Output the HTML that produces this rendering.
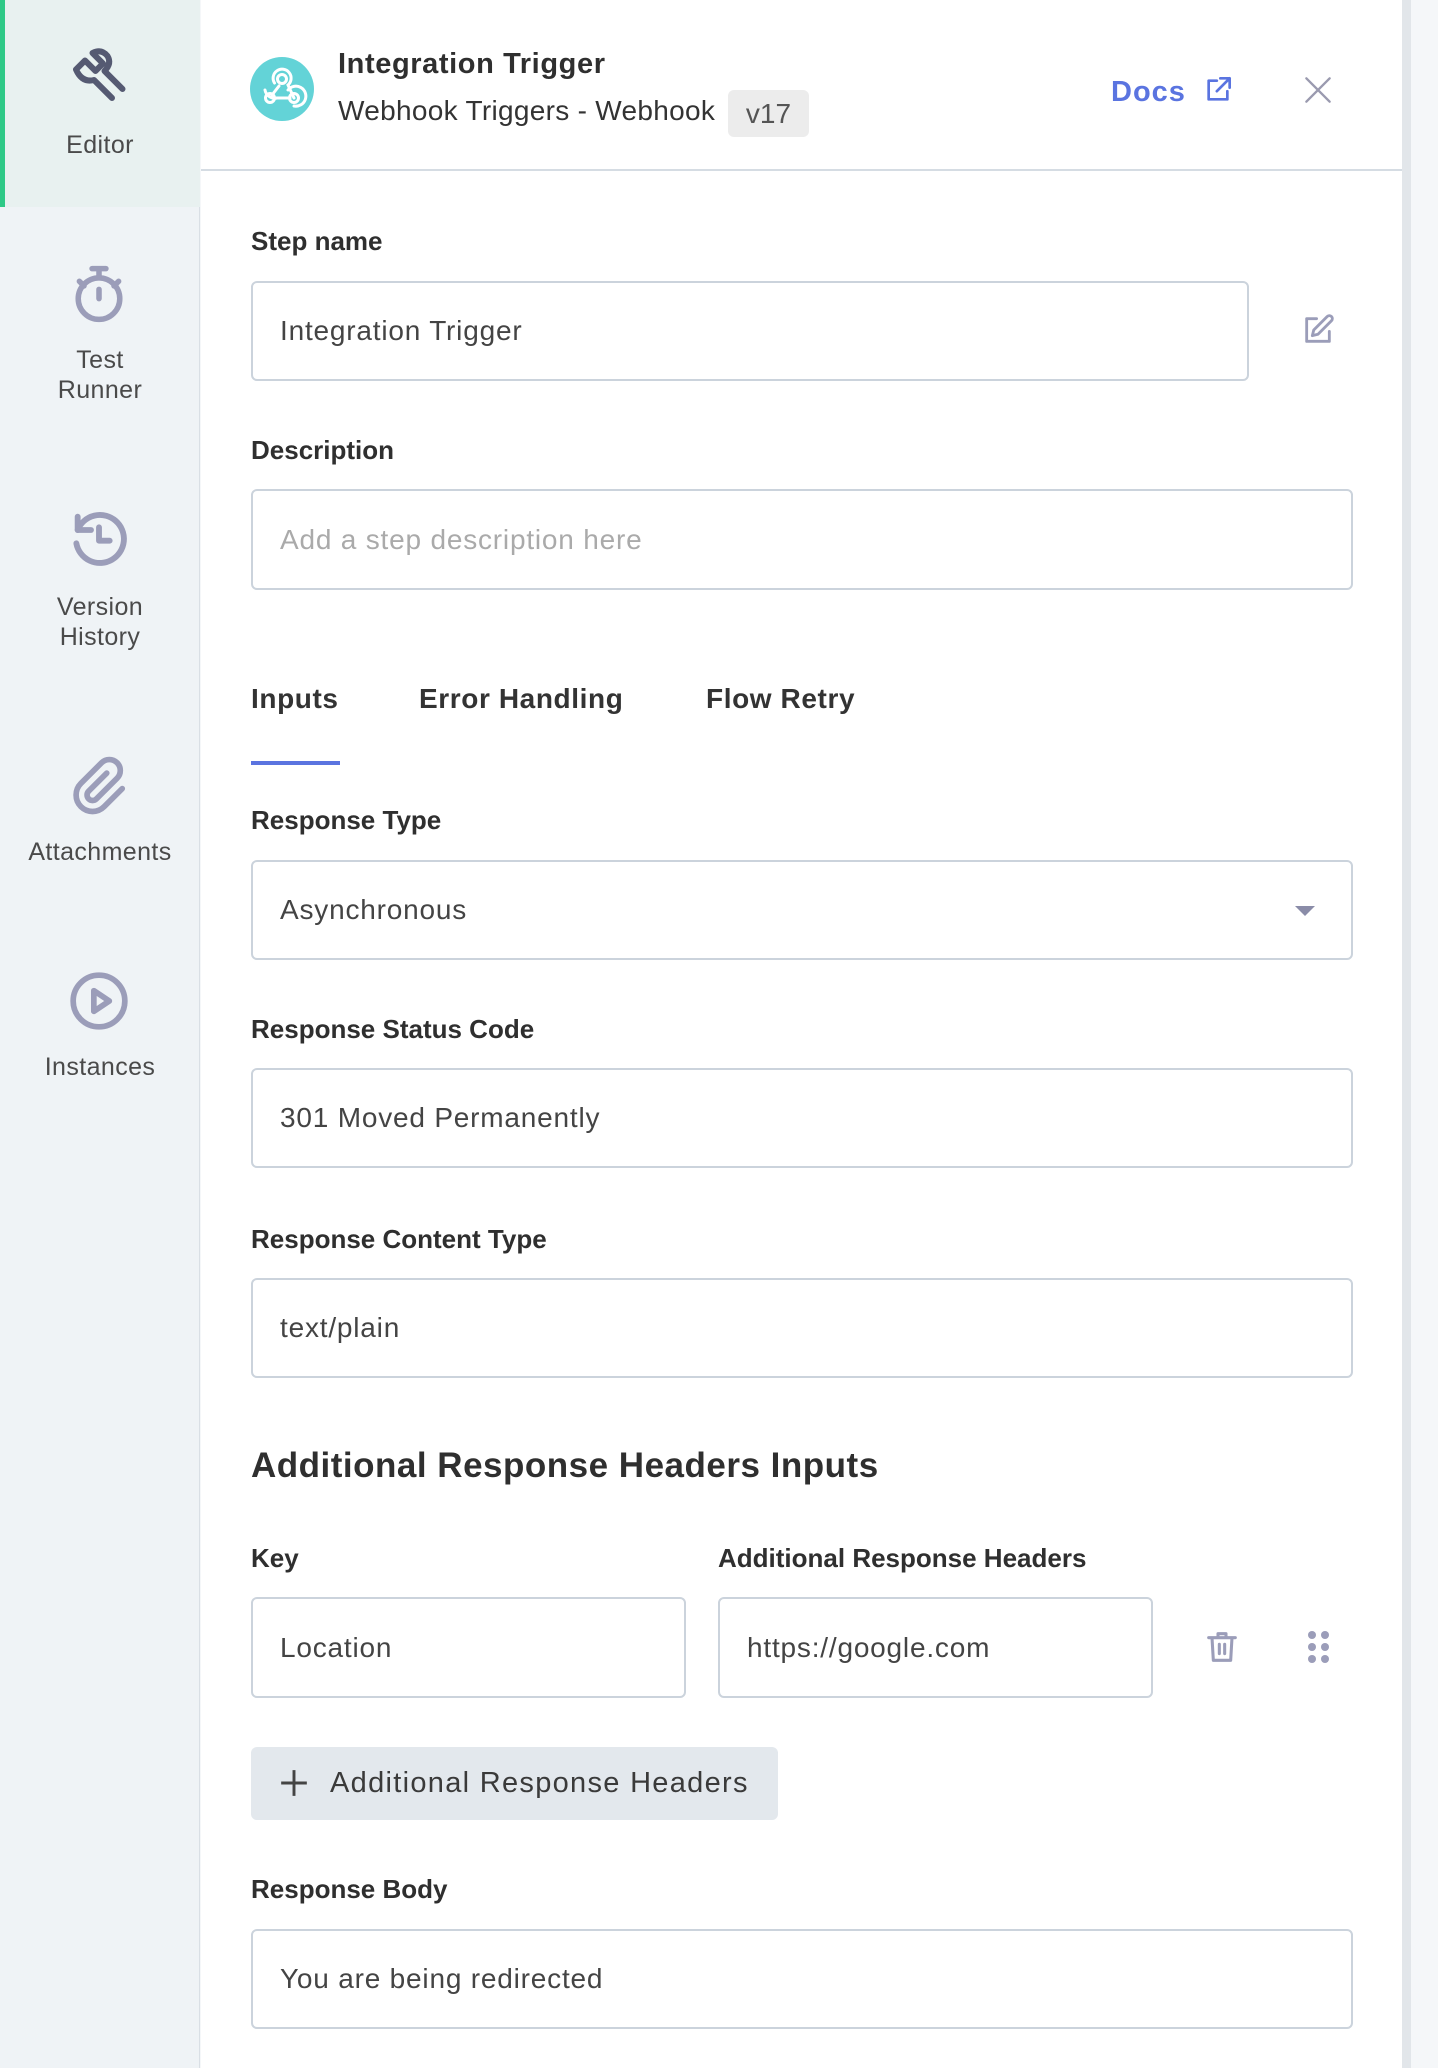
<!DOCTYPE html>
<html><head><meta charset="utf-8"><style>
*{box-sizing:border-box;margin:0;padding:0}
body{width:1438px;height:2068px;position:relative;overflow:hidden;background:#f5f7f9;font-family:"Liberation Sans",sans-serif;color:#333}
.abs{position:absolute}
#side{left:0;top:0;width:200px;height:2068px;background:#eff3f6;border-right:1px solid #d9dfe5}
#ed{left:0;top:0;width:200px;height:207px;background:#e8f1f0;border-left:5px solid #2ec987}
.sl{position:absolute;left:0;width:200px;text-align:center;font-size:25px;color:#4a4a4a;line-height:30px;letter-spacing:0.4px}
#panel{left:201px;top:0;width:1201px;height:2068px;background:#fff}
#strip{left:1402px;top:0;width:9px;height:2068px;background:#e2e6ea}
.lbl{position:absolute;left:251px;font-size:26px;font-weight:bold;color:#2f2f2f;line-height:30px}
.inp{position:absolute;border:2px solid #cbd3dc;border-radius:6px;background:#fff;font-size:28px;color:#444;padding-left:27px;display:flex;align-items:center;letter-spacing:0.8px}
.tab{position:absolute;top:682px;font-size:28px;font-weight:bold;color:#333;line-height:34px;letter-spacing:0.6px}
</style></head><body>
<div id="side" class="abs"></div>
<div id="ed" class="abs"></div>
<svg class="abs" style="left:64px;top:44px" width="72" height="72" viewBox="0 0 24 24" fill="none" stroke="#555a72" stroke-width="2" stroke-linecap="round" stroke-linejoin="round"><path d="M7 5.5 L4 8.5 Q6 13 10 12 L16 18 M13.5 9 L19.5 15 M7 5.5 L10.5 9 L13 6.5 L9.5 3 Q12.5 1.5 14.5 4 Q16 6.5 13.5 9"/></svg>
<div class="sl" style="top:130px">Editor</div>
<svg class="abs" style="left:71px;top:264px" width="56" height="60" viewBox="0 0 24 26" fill="none" stroke="#9b9db9" stroke-width="2.4" stroke-linecap="round"><circle cx="12" cy="15" r="9"/><path d="M9 2h6M12 2v4M12 11v4M3.5 7.5l2 2M20.5 7.5l-2 2"/></svg>
<div class="sl" style="top:345px">Test<br>Runner</div>
<svg class="abs" style="left:67px;top:506px" width="64" height="64" viewBox="0 0 24 24" fill="none" stroke="#9b9db9" stroke-width="2.2" stroke-linecap="round" stroke-linejoin="round"><path d="M4 9 A9 9 0 1 1 3.5 14"/><path d="M4 4v5h5"/><path d="M12 8v5h4"/></svg>
<div class="sl" style="top:592px">Version<br>History</div>
<svg class="abs" style="left:68px;top:754px" width="62" height="64" viewBox="0 0 24 24" fill="none" stroke="#9b9db9" stroke-width="2.2" stroke-linecap="round"><path d="M15 7l-7 7a2 2 0 0 0 3 3l8-8a4 4 0 0 0-6-6l-8 8a6 6 0 0 0 9 9l7-7"/></svg>
<div class="sl" style="top:837px">Attachments</div>
<svg class="abs" style="left:68px;top:969px" width="62" height="64" viewBox="0 0 24 24" fill="none" stroke="#9b9db9" stroke-width="2.2" stroke-linejoin="round"><circle cx="12" cy="12" r="10"/><path d="M10 8l6 4-6 4z"/></svg>
<div class="sl" style="top:1052px">Instances</div>

<div id="panel" class="abs"></div>
<div id="strip" class="abs"></div>
<div class="abs" style="left:201px;top:169px;width:1201px;height:2px;background:#d5dce3"></div>
<svg class="abs" style="left:250px;top:57px" width="64" height="64" viewBox="0 0 64 64"><circle cx="32" cy="32" r="32" fill="#63d3d7"/><g fill="none" stroke="#fff" stroke-width="3" stroke-linecap="round"><circle cx="32" cy="22" r="4.5"/><circle cx="20" cy="41" r="4.5"/><circle cx="44" cy="41" r="4.5"/><path d="M29 29 L22 38 M25 41 H40"/><path d="M24.5 26 A9 9 0 1 1 38 28 L44 41"/><path d="M27 41 A10 10 0 0 1 15 33"/><path d="M38 33 A10 10 0 1 1 44 49"/></g></svg>
<div class="abs" style="left:338px;top:47px;font-size:29px;font-weight:bold;color:#2f2f2f;line-height:34px;letter-spacing:0.6px">Integration Trigger</div>
<div class="abs" style="left:338px;top:94px;font-size:28px;color:#333;line-height:34px;letter-spacing:0.3px">Webhook Triggers - Webhook</div>
<div class="abs" style="left:728px;top:90px;width:81px;height:47px;background:#ececec;border-radius:6px;font-size:28px;color:#555;text-align:center;line-height:47px">v17</div>
<div class="abs" style="left:1111px;top:74px;font-size:29px;font-weight:bold;color:#5a74e0;line-height:36px;letter-spacing:1px">Docs</div>
<svg class="abs" style="left:1203px;top:76px" width="30" height="28" viewBox="0 0 24 24" fill="none" stroke="#5a74e0" stroke-width="2.3" stroke-linecap="round" stroke-linejoin="round"><path d="M11 4H4v16h16v-7M14 2h8v8M22 2L11 13"/></svg>
<svg class="abs" style="left:1304px;top:76px" width="28" height="28" viewBox="0 0 24 24" stroke="#9a9aaf" stroke-width="2" stroke-linecap="round"><path d="M2 2L22 22M22 2L2 22"/></svg>

<div class="lbl" style="top:226px">Step name</div>
<div class="inp" style="left:251px;top:281px;width:998px;height:100px">Integration Trigger</div>
<svg class="abs" style="left:1301px;top:313px" width="34" height="34" viewBox="0 0 24 24" fill="none" stroke="#9b9db9" stroke-width="2" stroke-linecap="round" stroke-linejoin="round"><path d="M11 4H4v16h16v-7"/><path d="M18.5 2.5a2.1 2.1 0 0 1 3 3L12 15l-4 1 1-4z"/></svg>
<div class="lbl" style="top:435px">Description</div>
<div class="inp" style="left:251px;top:489px;width:1102px;height:101px;color:#aaa">Add a step description here</div>
<div class="tab" style="left:251px">Inputs</div>
<div class="tab" style="left:419px">Error Handling</div>
<div class="tab" style="left:706px">Flow Retry</div>
<div class="abs" style="left:251px;top:761px;width:89px;height:4px;background:#5b74e0"></div>
<div class="lbl" style="top:805px">Response Type</div>
<div class="inp" style="left:251px;top:860px;width:1102px;height:100px">Asynchronous</div>
<div class="abs" style="left:1295px;top:906px;width:0;height:0;border-left:10px solid transparent;border-right:10px solid transparent;border-top:10px solid #8a8ca8"></div>
<div class="lbl" style="top:1014px">Response Status Code</div>
<div class="inp" style="left:251px;top:1068px;width:1102px;height:100px">301 Moved Permanently</div>
<div class="lbl" style="top:1224px">Response Content Type</div>
<div class="inp" style="left:251px;top:1278px;width:1102px;height:100px">text/plain</div>
<div class="abs" style="left:251px;top:1445px;font-size:35px;font-weight:bold;color:#2f2f2f;line-height:42px;letter-spacing:0.5px">Additional Response Headers Inputs</div>
<div class="lbl" style="top:1543px">Key</div>
<div class="lbl" style="top:1543px;left:718px">Additional Response Headers</div>
<div class="inp" style="left:251px;top:1597px;width:435px;height:101px">Location</div>
<div class="inp" style="left:718px;top:1597px;width:435px;height:101px">https://google.com</div>
<svg class="abs" style="left:1206px;top:1629px" width="32" height="36" viewBox="0 0 24 26" fill="none" stroke="#9b9db9" stroke-width="2.3" stroke-linecap="round" stroke-linejoin="round"><path d="M2 6h20M9 6V3h6v3M4.5 6l1 17h13l1-17M10 11v7M14 11v7"/></svg>
<svg class="abs" style="left:1306px;top:1629px" width="26" height="38" viewBox="0 0 26 38" fill="#9b9db9"><circle cx="6" cy="6" r="4"/><circle cx="19" cy="6" r="4"/><circle cx="6" cy="18" r="4"/><circle cx="19" cy="18" r="4"/><circle cx="6" cy="30" r="4"/><circle cx="19" cy="30" r="4"/></svg>
<div class="abs" style="left:251px;top:1747px;width:527px;height:73px;background:#e3e8ed;border-radius:6px"></div>
<svg class="abs" style="left:280px;top:1769px" width="28" height="28" viewBox="0 0 24 24" stroke="#444" stroke-width="2.5"><path d="M12 1v22M1 12h22"/></svg>
<div class="abs" style="left:330px;top:1765px;font-size:29px;color:#3a3a3a;line-height:36px;letter-spacing:1.3px">Additional Response Headers</div>
<div class="lbl" style="top:1874px">Response Body</div>
<div class="inp" style="left:251px;top:1929px;width:1102px;height:100px">You are being redirected</div>
</body></html>
